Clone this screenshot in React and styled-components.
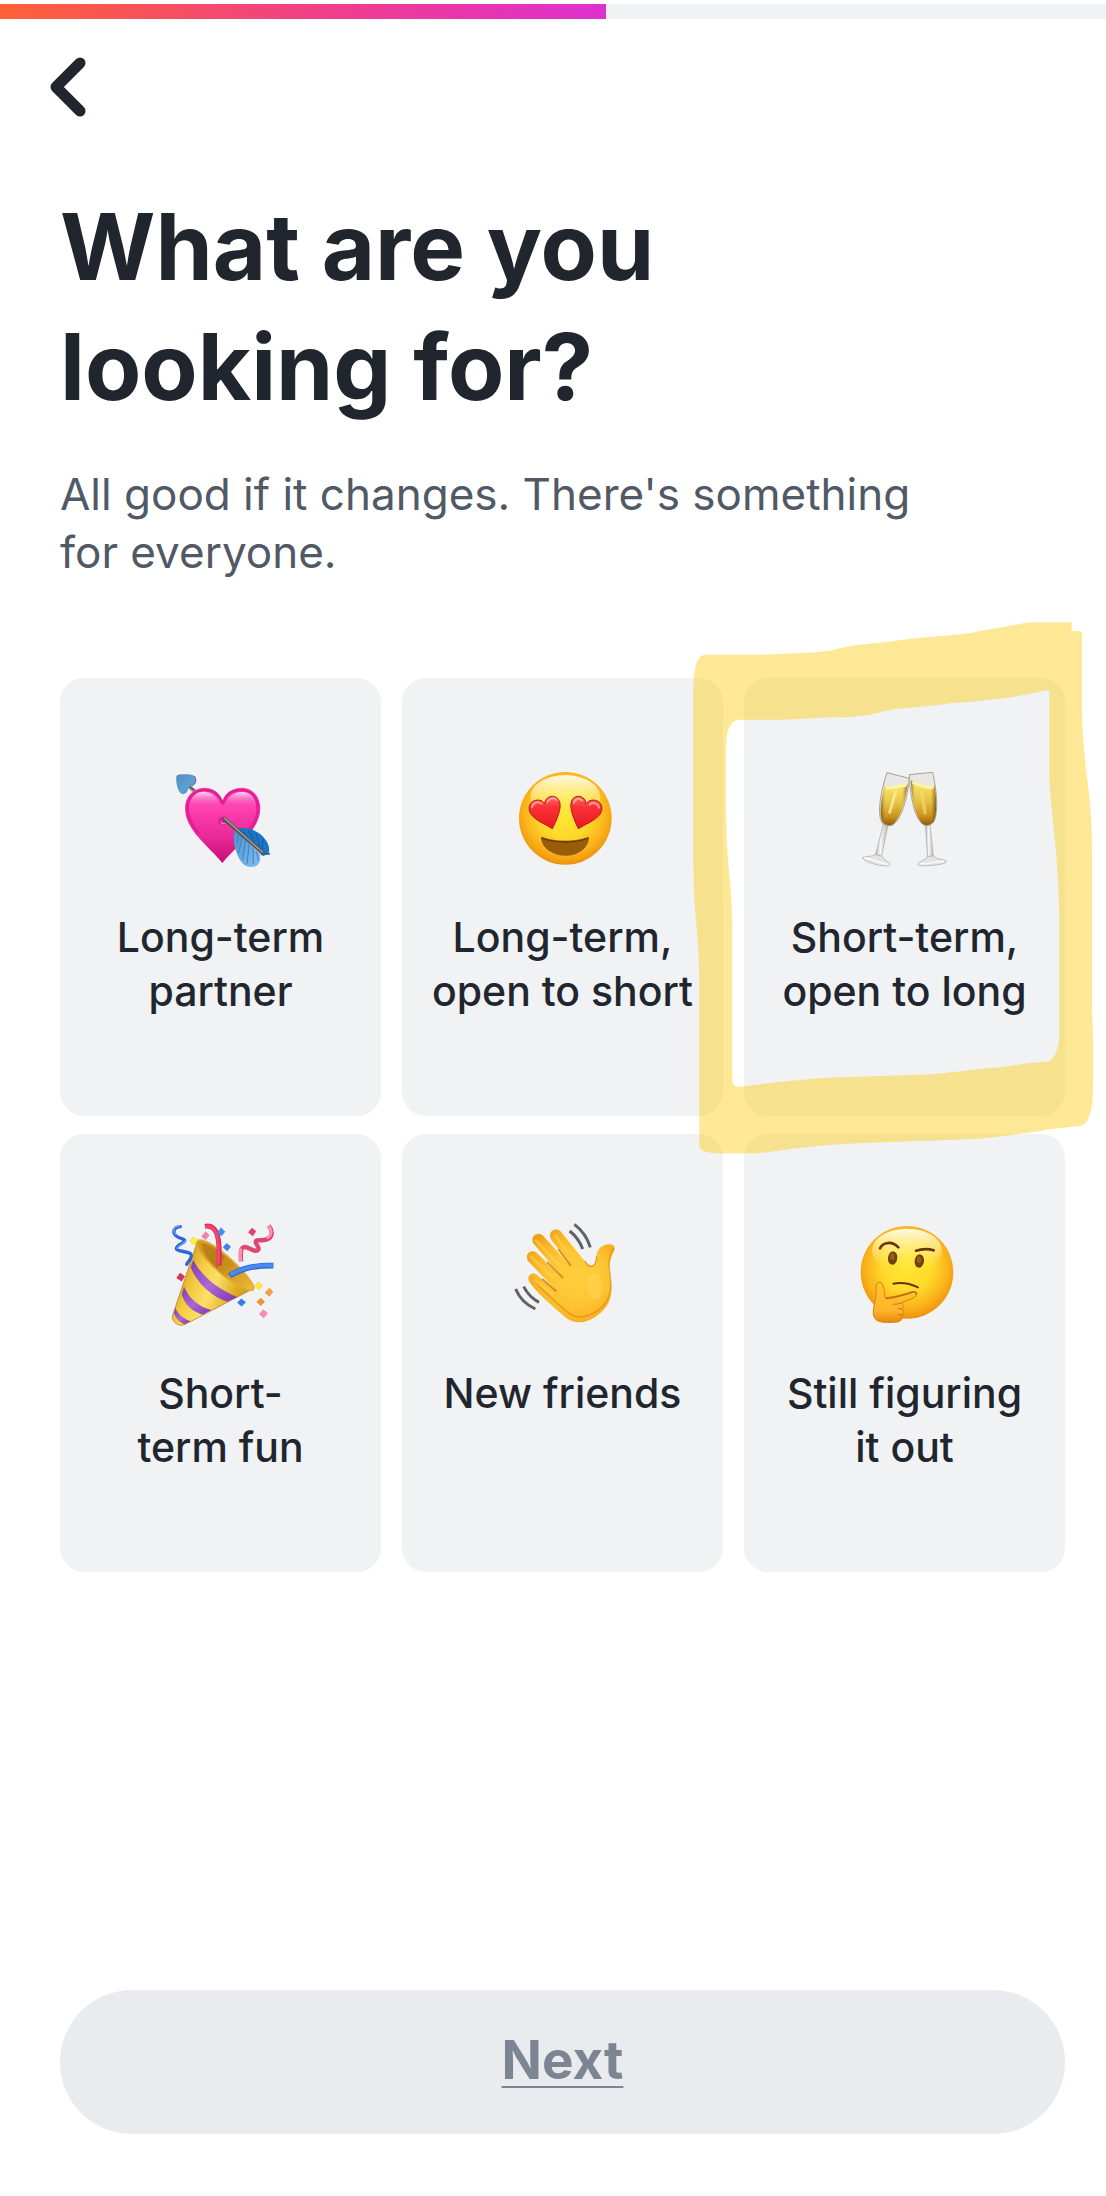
import { useState } from "react";
import styled, { createGlobalStyle } from "styled-components";

const colors = {
  ink: "#21262e",
  text: "#505965",
  muted: "#7c8591",
  card: "#f0f2f4",
  button: "#e9ebee",
};

const fontStack = `Inter, "Liberation Sans", sans-serif`;

/* EMOJI -------------------------------------------------------------------- */
const HeartArrow = () => (
  <Emoji viewBox="-11 0 390 375" aria-hidden="true">
    <defs>
      <linearGradient id="ha-heart" x1="0" y1="0" x2="0" y2="1">
        <stop offset="0" stopColor="#ff5fc0" />
        <stop offset="0.35" stopColor="#fb3aab" />
        <stop offset="0.65" stopColor="#e72a98" />
        <stop offset="1" stopColor="#c80b78" />
      </linearGradient>
      <linearGradient id="ha-shine" x1="0" y1="0" x2="0" y2="1">
        <stop offset="0" stopColor="#ffffff" stopOpacity="0.75" />
        <stop offset="1" stopColor="#ff6cc4" stopOpacity="0" />
      </linearGradient>
      <linearGradient id="ha-tip" x1="0" y1="0" x2="1" y2="1">
        <stop offset="0" stopColor="#4f8fc6" />
        <stop offset="0.6" stopColor="#5f9fd2" />
        <stop offset="1" stopColor="#3f76ad" />
      </linearGradient>
      <linearGradient id="ha-light" x1="0" y1="0" x2="1" y2="1">
        <stop offset="0" stopColor="#4a92cf" />
        <stop offset="1" stopColor="#7fbdf0" />
      </linearGradient>
    </defs>
    <path d="M84 92l22 18" stroke="#5c6066" strokeWidth="11" />
    <path d="M86 98l18 14" stroke="#c9ccd0" strokeWidth="3" />
    <path
      d="M50 64c3-6 14-6 26-6 14-1 28 1 32 11 4 10-1 20-10 23-6 3-11 3-13 8 1 8-6 17-16 18-14-4-21-32-19-54z"
      fill="url(#ha-tip)"
    />
    <path d="M104 63c8 12 4 24-6 29" fill="none" stroke="#a04f92" strokeWidth="3" />
    <path
      d="M189 140C180 112 160 98 135 98c-35 0-59 27-59 62 0 66 72 114 112 164 40-50 114-98 114-164 0-35-22-62-57-62-27 0-47 14-56 42z"
      fill="url(#ha-heart)"
    />
    <path
      d="M189 148c-10-30-30-43-54-43-31 0-52 24-52 55 0 29 15 54 35 77M189 148c9-30 30-43 56-43 31 0 50 24 50 55 0 25-10 45-25 63"
      fill="none"
      stroke="#e51d93"
      strokeWidth="9"
    />
    <path d="M90 150c4-30 25-42 47-39 22 3 37 15 44 38z" fill="url(#ha-shine)" />
    <path d="M198 149c7-24 23-36 45-38 23-2 42 10 46 39z" fill="url(#ha-shine)" />
    <ellipse cx="190" cy="198" rx="14" ry="13" fill="#b60b6c" opacity="0.5" />
    <path d="M183 200c4 7 9 8 13 4" fill="none" stroke="#ff7cc8" strokeWidth="4" />
    <path
      d="M227 221c31-8 66 5 86 27 14 15 18 32 14 46l-19 6z"
      fill="#1c76c4"
    />
    <path
      d="M226 223c-7 19-4 41 2 61 6 22 17 42 33 50 14 5 31 2 37-10 5-8 4-17 2-28z"
      fill="url(#ha-light)"
    />
    <path
      d="M237 236l-5 30M247 246l-10 48M257 256l-8 58M269 267l-7 60M280 278l1 50M291 289l5 28"
      stroke="#3f83bb"
      strokeWidth="3"
      fill="none"
    />
    <path
      d="M243 222l22 26M266 226l20 40M289 235l11 42M310 251l-2 32"
      stroke="#0d5ea6"
      strokeWidth="3"
      fill="none"
    />
    <path d="M195 192L312 296" stroke="#50545b" strokeWidth="12" strokeLinecap="round" />
    <path d="M195 190L308 291" stroke="#a8a29b" strokeWidth="4" strokeLinecap="round" />
    <path d="M306 298l22-2" stroke="#2768a3" strokeWidth="6" strokeLinecap="round" />
  </Emoji>
);

const FaceDefs = ({ id }) => (
  <defs>
    <radialGradient id={`${id}-face`} cx="0.5" cy="0.44" r="0.6">
      <stop offset="0" stopColor="#ffe733" />
      <stop offset="0.45" stopColor="#fed92b" />
      <stop offset="0.74" stopColor="#fbb31b" />
      <stop offset="0.9" stopColor="#f1980f" />
      <stop offset="1" stopColor="#d67c0b" />
    </radialGradient>
    <linearGradient id={`${id}-shine`} x1="0" y1="0" x2="0" y2="1">
      <stop offset="0" stopColor="#fffdf0" stopOpacity="0.95" />
      <stop offset="0.5" stopColor="#fff7a0" stopOpacity="0.55" />
      <stop offset="1" stopColor="#ffe838" stopOpacity="0" />
    </linearGradient>
    <linearGradient id={`${id}-eye`} x1="0" y1="0" x2="0" y2="1">
      <stop offset="0" stopColor="#ff6a5e" />
      <stop offset="0.35" stopColor="#fb2f36" />
      <stop offset="1" stopColor="#e81a22" />
    </linearGradient>
    <linearGradient id={`${id}-hand`} x1="0" y1="0" x2="0" y2="1">
      <stop offset="0" stopColor="#ffc52e" />
      <stop offset="0.7" stopColor="#ffb52a" />
      <stop offset="1" stopColor="#e8880f" />
    </linearGradient>
  </defs>
);

const HeartEyes = () => (
  <Emoji viewBox="-6 0 390 375" aria-hidden="true">
    <FaceDefs id="he" />
    <circle cx="196" cy="190" r="139" fill="url(#he-face)" />
    <ellipse cx="196" cy="126" rx="105" ry="66" fill="url(#he-shine)" />
    <path
      d="M157 221c-20-13-49-24-63-42-13-17-6-39 13-43 12-3 23 3 27 10 1-11 8-20 20-22 19-2 29 15 26 36-4 23-14 42-23 61z"
      fill="url(#he-eye)"
      stroke="#b5161c"
      strokeWidth="3"
    />
    <path
      d="M235 221c20-13 50-24 64-42 13-17 6-39-13-43-12-3-23 3-28 10-1-11-8-20-20-22-19-2-28 15-25 36 4 23 13 42 22 61z"
      fill="url(#he-eye)"
      stroke="#b5161c"
      strokeWidth="3"
    />
    <path d="M96 157c2-14 15-19 29-11M142 142c3-10 20-17 28-7" fill="none" stroke="#ffb3a8" strokeWidth="6" strokeLinecap="round" opacity="0.8" />
    <path d="M222 143c2-13 16-15 25-6M269 149c7-8 25-6 28 9" fill="none" stroke="#ffb3a8" strokeWidth="6" strokeLinecap="round" opacity="0.8" />
    <path
      d="M123 250c1-5 5-4 10-2 38 12 88 12 125 0 6-2 9-2 9 3-3 28-31 51-71 51s-70-24-73-52z"
      fill="#9a5d07"
    />
    <path d="M124 249c42 16 101 16 142 0" fill="none" stroke="#5f3504" strokeWidth="4" />
  </Emoji>
);

const Glasses = () => (
  <Emoji viewBox="1 0 390 375" aria-hidden="true">
    <defs>
      <linearGradient id="gl-wine" x1="0" y1="0" x2="0" y2="1">
        <stop offset="0" stopColor="#fbe874" />
        <stop offset="0.45" stopColor="#e8c445" />
        <stop offset="0.8" stopColor="#cb911c" />
        <stop offset="1" stopColor="#8a5c0f" />
      </linearGradient>
      <linearGradient id="gl-edge" x1="0" y1="0" x2="1" y2="0">
        <stop offset="0" stopColor="#4a3208" stopOpacity="0.55" />
        <stop offset="0.16" stopColor="#6e4b0b" stopOpacity="0" />
        <stop offset="0.8" stopColor="#6e4b0b" stopOpacity="0" />
        <stop offset="1" stopColor="#4a3208" stopOpacity="0.65" />
      </linearGradient>
      <linearGradient id="gl-glass" x1="0" y1="0" x2="1" y2="0">
        <stop offset="0" stopColor="#b5b3b0" />
        <stop offset="0.4" stopColor="#f6f6f5" />
        <stop offset="1" stopColor="#bdbab6" />
      </linearGradient>
    </defs>
    <path d="M131 207l14 4-20 95-18-4z" fill="url(#gl-glass)" stroke="#a7a5a2" strokeWidth="2" />
    <path d="M69 308c10-5 25-2 38-9l19 4c6 14 20 15 26 25-2 7-23 6-42 1-20-5-41-13-41-21z" fill="#e4e4e4" stroke="#a5a4a2" strokeWidth="2" />
    <path d="M74 309c20 0 45 16 74 19" fill="none" stroke="#fff" strokeWidth="4" />
    <path d="M142 53l67 17c-5 55-22 119-48 139-8 6-26 3-34-6-17-26-2-101 15-150z" fill="#e9e7e3" stroke="#a5a19b" strokeWidth="3" />
    <path d="M135 91c20 12 45-8 69-2-6 46-22 101-44 119-9 5-24 3-31-6-12-23-4-73 6-111z" fill="url(#gl-wine)" />
    <path d="M135 91c20 12 45-8 69-2-6 46-22 101-44 119-9 5-24 3-31-6-12-23-4-73 6-111z" fill="url(#gl-edge)" />
    <path d="M138 97c24 7 41-10 63-5" fill="none" stroke="#fdf3a6" strokeWidth="10" />
    <path d="M168 110l-18 62" stroke="#fcf0a2" strokeWidth="9" strokeLinecap="round" opacity="0.75" />
    <path d="M257 211l14-2 10 96-17 2z" fill="url(#gl-glass)" stroke="#a7a5a2" strokeWidth="2" />
    <path d="M235 329c0-10 20-11 30-25l16-1c10 12 30 8 39 15 1 7-16 11-41 13-23 2-43 3-44-2z" fill="#e4e4e4" stroke="#a5a4a2" strokeWidth="2" />
    <path d="M242 326c28 2 43-8 71-7" fill="none" stroke="#fff" strokeWidth="4" />
    <path d="M209 59l70-7c12 53 19 125 2 150-7 10-24 12-33 5-26-22-37-92-39-148z" fill="#e9e7e3" stroke="#a5a19b" strokeWidth="3" />
    <path d="M213 76c22 7 43 23 72 16 6 43 8 92-5 110-8 9-22 11-31 5-22-20-33-80-36-131z" fill="url(#gl-wine)" />
    <path d="M213 76c22 7 43 23 72 16 6 43 8 92-5 110-8 9-22 11-31 5-22-20-33-80-36-131z" fill="url(#gl-edge)" />
    <path d="M218 82c21 7 38 20 64 14" fill="none" stroke="#fdf3a6" strokeWidth="9" />
    <path d="M246 112l10 62" stroke="#f7de76" strokeWidth="10" strokeLinecap="round" opacity="0.6" />
  </Emoji>
);

const Popper = () => (
  <Emoji viewBox="-11 0 390 375" aria-hidden="true">
    <defs>
      <linearGradient id="pp-cone" x1="0" y1="0.3" x2="1" y2="0.8">
        <stop offset="0" stopColor="#c48f14" />
        <stop offset="0.3" stopColor="#f6cb3e" />
        <stop offset="0.5" stopColor="#fbe06a" />
        <stop offset="0.75" stopColor="#e2ab23" />
        <stop offset="1" stopColor="#c08615" />
      </linearGradient>
      <linearGradient id="pp-mouth" x1="0" y1="0" x2="1" y2="1">
        <stop offset="0" stopColor="#dd9628" />
        <stop offset="0.5" stopColor="#c78d1b" />
        <stop offset="1" stopColor="#efbe38" />
      </linearGradient>
      <linearGradient id="pp-stripe" x1="0" y1="0" x2="1" y2="1">
        <stop offset="0" stopColor="#7d3bb0" />
        <stop offset="0.5" stopColor="#ad68d6" />
        <stop offset="1" stopColor="#7c38ac" />
      </linearGradient>
    </defs>
    <path d="M113 92L38 316c-2 16 18 32 37 25l202-106z" fill="url(#pp-cone)" stroke="#a8760f" strokeWidth="2" />
    <path d="M101 146c21 46 75 91 132 112l-30 14c-46-14-93-57-110-104z" fill="url(#pp-stripe)" />
    <path d="M73 227c14 34 45 60 82 70l-26 14c-32-9-55-32-63-62z" fill="url(#pp-stripe)" />
    <path d="M47 290c8 20 24 32 46 41l-19 9c-16-7-26-18-31-33z" fill="url(#pp-stripe)" />
    <path d="M112 91c13-13 58 13 103 55 42 39 73 78 66 89-10 11-62-15-106-55-43-39-72-76-63-89z" fill="url(#pp-mouth)" stroke="#e0ad31" strokeWidth="5" />
    <path d="M126 97c18 2 45 18 70 40l-22 38c-25-24-46-55-48-78z" fill="#99620b" opacity="0.4" />
    <path d="M136 46c18-4 29 5 36 23 8 24 8 55 6 95" fill="none" stroke="#d62c5b" strokeWidth="15" />
    <path d="M138 46c17-3 27 7 33 24 7 24 7 54 5 92" fill="none" stroke="#f5446f" strokeWidth="9" />
    <path d="M210 194c32-20 76-32 131-30" fill="none" stroke="#2a62cd" strokeWidth="17" />
    <path d="M212 191c33-19 75-29 129-28" fill="none" stroke="#4b8af2" strokeWidth="12" />
    <path d="M62 47c-20 1-25 17-12 28 14 11 27 8 25 15-2 7-25 11-25 23 2 11 38 6 44 17 5 9-6 18-13 30" fill="none" stroke="#2c66d8" strokeWidth="10" strokeLinecap="round" />
    <path d="M60 45c-19 1-22 16-10 26M52 112c9-12 21-13 24-22" fill="none" stroke="#6ba0fa" strokeWidth="4" strokeLinecap="round" />
    <path d="M327 44c14 16 12 35-5 41-19 7-32-2-34 7-1 8 12 15 8 24-9 12-29-10-43-8-12 3-10 22-9 43" fill="none" stroke="#e04673" strokeWidth="13" />
    <path d="M327 45c11 14 10 29-6 36M245 113c-5 8-3 22-2 37" fill="none" stroke="#ff91b0" strokeWidth="9" />
    <path d="M138 62l11 11-12 13-11-10z" fill="#f184aa" stroke="#d55786" />
    <path d="M184 50l12 12-11 13-12-10z" fill="#4390f1" stroke="#2867be" />
    <path d="M201 97l12 10-10 13-13-11z" fill="#3c86e9" stroke="#2867be" />
    <path d="M277 51l12 10-10 14-13-11z" fill="#e8426c" stroke="#bf2c50" />
    <path d="M101 78l13 10-11 14-13-12z" fill="#fdf03c" stroke="#d7c221" />
    <path d="M61 186l14 10-9 15-15-10z" fill="#d9335c" stroke="#ad2144" />
    <path d="M295 213l14 10-11 13-14-10z" fill="#fbe73d" stroke="#d7c221" />
    <path d="M329 231l11 11-11 14-13-11z" fill="#f8a040" stroke="#d67e25" />
    <path d="M303 261l12 11-12 12-12-11z" fill="#f79429" stroke="#d67e25" />
    <path d="M245 263l13 11-12 12-13-11z" fill="#327fe5" stroke="#2867be" />
    <path d="M311 296l13 11-12 14-13-12z" fill="#f68fb6" stroke="#dc699a" />
  </Emoji>
);

const Wave = () => (
  <Emoji viewBox="-6 3 390 375" aria-hidden="true">
    <defs>
      <radialGradient id="wv-hand" gradientUnits="userSpaceOnUse" cx="230" cy="200" r="165">
        <stop offset="0" stopColor="#ffcf40" />
        <stop offset="0.55" stopColor="#fdc431" />
        <stop offset="0.85" stopColor="#f8ae20" />
        <stop offset="1" stopColor="#f0a01c" />
      </radialGradient>
    </defs>
    <path
      d="M212 168L152 86c-9-17 10-37 29-23l70 86c8 11 14 18 21 18 15-1 15-12 17-29 3-22 20-38 42-35 13 2 16 12 11 21-13 24-17 43-12 71 6 42 10 80-26 112-37 34-79 40-109 14-34-30-84-70-106-104-12-18 6-34 21-23l60 50L84 153c-12-18 7-37 24-26l81 77L99 99c-9-19 13-37 29-23z"
      fill="url(#wv-hand)"
    />
    <path
      d="M340 115c-12 22-16 43-11 70 6 40 9 76-24 107-35 32-75 38-103 14-32-28-79-67-103-99"
      fill="none"
      stroke="#d88710"
      strokeWidth="5"
      opacity="0.55"
      strokeLinecap="round"
    />
    <path d="M168 243l-40-35M188 203l-45-46M211 166l-35-47" stroke="#c87309" strokeWidth="5" strokeLinecap="round" opacity="0.75" />
    <path d="M254 153c8 11 12 17 20 16 14-2 15-18 16-31" fill="none" stroke="#d58310" strokeWidth="4" opacity="0.7" />
    <ellipse cx="284" cy="228" rx="22" ry="40" fill="#ffdb5f" opacity="0.4" />
    <path d="M108 92l70 75M166 76l36 51M92 139l66 63M102 210l54 42" stroke="#ffd24c" strokeWidth="8" strokeLinecap="round" opacity="0.6" />
    <path
      d="M223 43c24 18 39 39 48 69M209 63c20 16 31 31 39 54M47 237c11 27 31 47 59 60M71 230c11 21 25 36 46 47"
      fill="none"
      stroke="#5f6265"
      strokeWidth="9"
    />
  </Emoji>
);

const Thinking = () => (
  <Emoji viewBox="1 3 390 375" aria-hidden="true">
    <FaceDefs id="th" />
    <circle cx="202" cy="187" r="139" fill="url(#th-face)" />
    <ellipse cx="202" cy="122" rx="105" ry="66" fill="url(#th-shine)" />
    <path d="M121 115c10-20 37-22 55-3" fill="none" stroke="#693506" strokeWidth="8" strokeLinecap="round" />
    <path d="M229 122c15-5 34-7 53-1" fill="none" stroke="#693506" strokeWidth="8" strokeLinecap="round" />
    <ellipse cx="159" cy="144" rx="14" ry="20" fill="#70400c" transform="rotate(8 159 144)" />
    <ellipse cx="239" cy="153" rx="14" ry="20" fill="#70400c" transform="rotate(8 239 153)" />
    <ellipse cx="158" cy="140" rx="7" ry="10" fill="#93601d" />
    <ellipse cx="238" cy="149" rx="7" ry="10" fill="#93601d" />
    <path d="M161 221c24-5 51 0 74 11" fill="none" stroke="#65330a" strokeWidth="6" strokeLinecap="round" />
    <path
      d="M109 229c0-11 11-16 18-8 7 9 7 28 9 42 24-1 54-9 82-18 14-4 19 10 6 17-13 8-27 12-39 16 7 6 7 14 2 19 6 6 5 14-1 19 4 12-3 19-14 20-19 2-44 3-59-4-13-7-14-24-10-43 4-22 8-38 6-60z"
      fill="url(#th-hand)"
      stroke="#d98210"
      strokeWidth="3"
    />
    <path d="M138 266c25-3 53-10 81-20 9-2 13 3 10 9" fill="none" stroke="#b96b0b" strokeWidth="4" />
    <path d="M185 279c-9 3-15 3-24 4M187 297l-11-1M187 315l-10-1" fill="none" stroke="#c4740c" strokeWidth="3" strokeLinecap="round" />
  </Emoji>
);

const OPTIONS = [
  { id: "partner", label: "Long-term\npartner", icon: HeartArrow },
  { id: "long-open", label: "Long-term,\nopen to short", icon: HeartEyes },
  { id: "short-open", label: "Short-term,\nopen to long", icon: Glasses, marked: true },
  { id: "fun", label: "Short-\nterm fun", icon: Popper },
  { id: "friends", label: "New friends", icon: Wave },
  { id: "unsure", label: "Still figuring\nit out", icon: Thinking },
];

const Marker = () => (
  <StMarker viewBox="0 0 1278 1568" preserveAspectRatio="none" aria-hidden="true">
    <path
      fillRule="evenodd"
      d="M75 125H240C320 122 390 121 450 114C490 106 520 97 560 95C610 92 660 84 720 78C770 74 820 70 870 65C910 56 970 49 1030 37Q1050 34 1070 34H1175V59H1200Q1206 59 1206 66V300C1208 350 1213 390 1217 440C1226 500 1236 580 1236 670V1120C1241 1200 1239 1290 1239 1340C1239 1395 1228 1440 1200 1445L1105 1454C1085 1460 1060 1462 1030 1465C970 1472 920 1479 860 1482C780 1486 710 1486 650 1489C560 1492 480 1495 400 1502C330 1507 270 1519 225 1521H125C90 1521 58 1517 58 1500V1060C58 990 54 930 49 880C43 820 40 760 40 700V240C40 170 47 128 75 125ZM180 307C152 307 138 332 138 390V560C138 620 142 680 147 730C155 800 157 860 157 910V1320Q160 1335 175 1335C210 1332 240 1327 265 1325C330 1319 380 1314 440 1310C550 1304 660 1305 765 1299C830 1293 890 1285 960 1280C1010 1275 1050 1266 1100 1265C1123 1262 1138 1225 1138 1190V850C1136 770 1130 690 1122 620C1117 570 1112 530 1108 480V224C1070 230 1020 241 970 247C920 252 870 258 810 261C760 268 700 273 645 277C610 283 575 294 540 297C500 302 460 299 420 302C380 303 350 307 310 307Z"
    />
  </StMarker>
);

const App = () => {
  const [selected, setSelected] = useState(null);

  return (
    <>
      <GlobalStyle />
      <Page>
        <Progress role="progressbar" aria-valuenow={55} aria-valuemin={0} aria-valuemax={100}>
          <ProgressFill />
        </Progress>
        <Header>
          <BackButton type="button" aria-label="Back">
            <svg width="36" height="60" viewBox="0 0 36 60" fill="none">
              <path
                d="M30 6L6 30l24 24"
                stroke={colors.ink}
                strokeWidth="11"
                strokeLinecap="round"
                strokeLinejoin="round"
              />
            </svg>
          </BackButton>
        </Header>
        <Content>
          <Title>
            What are you
            <br />
            looking for?
          </Title>
          <Subtitle>
            All good if it changes. There's something
            <br />
            for everyone.
          </Subtitle>
          <Options>
            {OPTIONS.map(({ id, label, icon: Icon, marked }) => (
              <Option
                key={id}
                type="button"
                aria-pressed={selected === id}
                onClick={() => setSelected(id)}
              >
                <Icon />
                <OptionLabel>{label}</OptionLabel>
                {marked && <Marker />}
              </Option>
            ))}
          </Options>
        </Content>
        <Footer>
          <NextButton type="button" disabled={!selected}>
            Next
          </NextButton>
        </Footer>
      </Page>
    </>
  );
};

export default App;

const GlobalStyle = createGlobalStyle`
  * {
    box-sizing: border-box;
  }

  body {
    margin: 0;
    background: #fff;
    color: ${colors.ink};
    font-family: ${fontStack};
  }

  button {
    padding: 0;
    border: none;
    background: none;
    color: inherit;
    font-family: inherit;
    cursor: pointer;
  }
`;

const Page = styled.main`
  display: flex;
  flex-direction: column;
  min-height: 100vh;
  padding-top: 4px;
  overflow-x: hidden;
`;

const Progress = styled.div`
  height: 15px;
  background: ${colors.card};
`;

const ProgressFill = styled.div`
  width: 54.8%;
  height: 100%;
  background: linear-gradient(90deg, #ff6036, #ee3b94 60%, #de30d0);
`;

const Header = styled.header`
  padding: 38px 50px 0;
`;

const BackButton = styled.button`
  display: block;

  svg {
    display: block;
  }
`;

const Content = styled.section`
  padding: 70px 41px 0 60px;
`;

const Title = styled.h1`
  margin: 0;
  font-size: 92px;
  font-weight: 700;
  line-height: 120px;
`;

const Subtitle = styled.p`
  margin: 38px 0 0;
  color: ${colors.text};
  font-size: 44px;
  font-weight: 400;
  line-height: 58px;
`;

const Options = styled.div`
  display: grid;
  grid-template-columns: repeat(3, 1fr);
  gap: 18px 21px;
  margin-top: 97px;
`;

const Option = styled.button`
  display: flex;
  flex-direction: column;
  align-items: center;
  position: relative;
  min-height: 438px;
  padding-top: 77px;
  border-radius: 24px;
  background: ${colors.card};
`;

const Emoji = styled.svg`
  width: 130px;
  height: 125px;
`;

const OptionLabel = styled.span`
  margin-top: 30px;
  font-size: 41px;
  font-weight: 500;
  line-height: 54px;
  text-align: center;
  white-space: pre-line;
`;

const StMarker = styled.svg`
  position: absolute;
  top: -68px;
  left: -64px;
  z-index: 1;
  width: calc(100% + 105px);
  height: calc(100% + 122px);
  fill: #fdcc0b;
  opacity: 0.43;
  pointer-events: none;
`;

const Footer = styled.footer`
  margin-top: auto;
  padding: 40px 41px 62px 60px;
`;

const NextButton = styled.button`
  width: 100%;
  height: 144px;
  padding-bottom: 4px;
  border-radius: 72px;
  background: ${colors.button};
  color: ${colors.muted};
  font-size: 53px;
  font-weight: 700;
  text-decoration: underline;
  text-decoration-thickness: 2px;
  text-underline-offset: 7px;
`;
